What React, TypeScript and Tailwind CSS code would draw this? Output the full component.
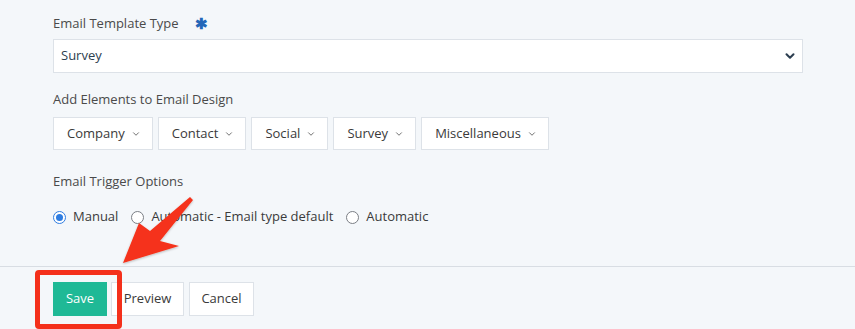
import { ChevronDown } from "lucide-react";

const elementMenus = ["Company", "Contact", "Social", "Survey", "Miscellaneous"];

const triggerOptions = [
  { label: "Manual", checked: true },
  { label: "Automatic - Email type default", checked: false },
  { label: "Automatic", checked: false },
];

function Radio({ checked }: { checked: boolean }) {
  return (
    <span
      className={
        checked
          ? "flex h-[13px] w-[13px] items-center justify-center rounded-full border border-[#2f7de1] bg-white"
          : "flex h-[13px] w-[13px] items-center justify-center rounded-full border border-[#7b7f85] bg-white"
      }
    >
      {checked && <span className="h-[7px] w-[7px] rounded-full bg-[#2f7de1]" />}
    </span>
  );
}

export default function App() {
  return (
    <main
      className="relative h-[329px] w-[855px] overflow-hidden bg-[#f4f7fa] text-[13px] text-[#4a4a4a]"
      style={{ fontFamily: '"Open Sans", "Liberation Sans", sans-serif' }}
    >
      {/* Form fields */}
      <section className="px-[53px] pt-[14px]">
        <div className="flex h-[18px] items-center leading-[18px]">
          <span>Email Template Type</span>
          <span className="ml-[16px] text-[15px] font-bold text-[#2366b8]">✱</span>
        </div>
        <div className="mt-[7px] flex h-[34px] w-[750px] items-center justify-between border border-[#dde2e8] bg-white pl-[7px] pr-[5px]">
          <span className="text-[#2c3e50]">Survey</span>
          <ChevronDown className="h-[14px] w-[14px] text-[#2c3e50]" strokeWidth={3.5} />
        </div>

        <div className="mt-[17px] h-[18px] leading-[18px]">Add Elements to Email Design</div>
        <div className="mt-[9px] flex gap-[5px]">
          {elementMenus.map((name) => (
            <button
              key={name}
              className="flex h-[33px] items-center gap-[6px] border border-[#dde2e8] bg-white pl-[13px] pr-[11px] text-[#3a3a3a]"
            >
              <span>{name}</span>
              <ChevronDown className="h-[10px] w-[10px] text-[#555]" strokeWidth={2} />
            </button>
          ))}
        </div>

        <div className="mt-[22px] h-[18px] leading-[18px]">Email Trigger Options</div>
        <div className="mt-[18px] flex h-[18px] items-center">
          {triggerOptions.map((opt) => (
            <label key={opt.label} className="mr-[13px] flex items-center gap-[7px] text-[#3a3a3a]">
              <Radio checked={opt.checked} />
              <span>{opt.label}</span>
            </label>
          ))}
        </div>
      </section>

      {/* Footer actions */}
      <div className="mt-[40px] border-t border-[#d8dde3] px-[53px] pt-[15px]">
        <div className="flex gap-[4px]">
          <button className="h-[34px] w-[54px] bg-[#1fb996] text-white">Save</button>
          <button className="h-[34px] w-[73px] border border-[#dde2e8] bg-white text-[#3a3a3a]">Preview</button>
          <button className="ml-[1px] h-[34px] w-[65px] border border-[#dde2e8] bg-white text-[#3a3a3a]">Cancel</button>
        </div>
      </div>

      {/* Annotation overlay */}
      <div className="absolute left-[35px] top-[270px] h-[59px] w-[87px] rounded-[4px] border-[5px] border-[#f4301b]" />
      <svg className="pointer-events-none absolute inset-0" width="855" height="329">
        <defs>
          <filter id="shadow" x="-20%" y="-20%" width="140%" height="140%">
            <feDropShadow dx="0" dy="1" stdDeviation="1" floodColor="#000" floodOpacity="0.25" />
          </filter>
        </defs>
        <polygon
          points="123,263 139,223 150,231 190,197 193,200 160,241 179,246"
          fill="#f5321a"
          filter="url(#shadow)"
        />
      </svg>
    </main>
  );
}
